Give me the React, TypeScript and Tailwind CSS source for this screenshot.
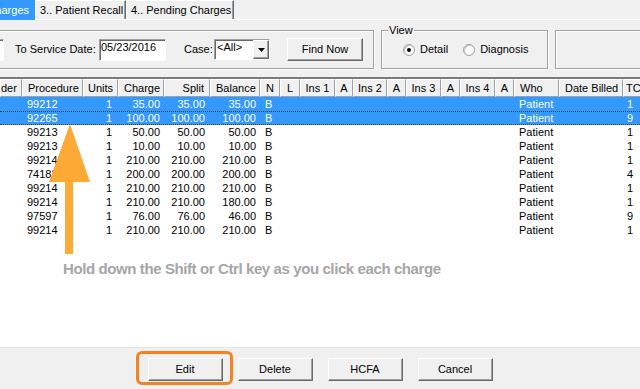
import React from "react";

const GRID =
  "grid grid-cols-[22px_61px_35px_46px_46px_50px_20px_20px_35px_18px_34px_19px_35px_19px_35px_19px_45px_64px_40px]";

const HEAD: { t: string; c: string }[] = [
  { t: "der", c: "pl-0" },
  { t: "Procedure", c: "pl-[5px]" },
  { t: "Units", c: "pl-[4px]" },
  { t: "Charge", c: "pl-[5px]" },
  { t: "Split", c: "justify-end pr-[5px]" },
  { t: "Balance", c: "pl-[5px]" },
  { t: "N", c: "justify-center" },
  { t: "L", c: "justify-center" },
  { t: "Ins 1", c: "justify-center" },
  { t: "A", c: "justify-center" },
  { t: "Ins 2", c: "justify-center" },
  { t: "A", c: "justify-center" },
  { t: "Ins 3", c: "justify-center" },
  { t: "A", c: "justify-center" },
  { t: "Ins 4", c: "justify-center" },
  { t: "A", c: "justify-center" },
  { t: "Who", c: "pl-[5px]" },
  { t: "Date Billed", c: "pl-[5px]" },
  { t: "TC", c: "pl-[2px]" },
];

const CELL_ALIGN = [
  "",
  "pl-[5px]",
  "justify-end pr-[6px]",
  "justify-end pr-[4px]",
  "justify-end pr-[5px]",
  "justify-end pr-[4px]",
  "pl-[5px]",
  "",
  "",
  "",
  "",
  "",
  "",
  "",
  "",
  "",
  "pl-[5px]",
  "",
  "justify-end pr-[30px]",
];

type Row = { proc: string; charge: string; split: string; bal: string; tc: string };

const ROWS: Row[] = [
  { proc: "99212", charge: "35.00", split: "35.00", bal: "35.00", tc: "1" },
  { proc: "92265", charge: "100.00", split: "100.00", bal: "100.00", tc: "9" },
  { proc: "99213", charge: "50.00", split: "50.00", bal: "50.00", tc: "1" },
  { proc: "99213", charge: "10.00", split: "10.00", bal: "10.00", tc: "1" },
  { proc: "99214", charge: "210.00", split: "210.00", bal: "210.00", tc: "1" },
  { proc: "74182", charge: "200.00", split: "200.00", bal: "200.00", tc: "4" },
  { proc: "99214", charge: "210.00", split: "210.00", bal: "210.00", tc: "1" },
  { proc: "99214", charge: "210.00", split: "210.00", bal: "180.00", tc: "1" },
  { proc: "97597", charge: "76.00", split: "76.00", bal: "46.00", tc: "9" },
  { proc: "99214", charge: "210.00", split: "210.00", bal: "210.00", tc: "1" },
];

const SUNKEN =
  "bg-white border border-t-[#a0a0a0] border-l-[#a0a0a0] border-r-white border-b-white shadow-[inset_1px_1px_0_#696969]";
const RAISED =
  "bg-[#f0f0f0] border border-t-white border-l-white border-r-[#696969] border-b-[#696969] shadow-[inset_-1px_-1px_0_#a0a0a0]";
const GROUP = "border border-[#a0a0a0] shadow-[inset_1px_1px_0_#fff,1px_1px_0_#fff]";
const TAB =
  "h-[19px] border-t border-l border-white border-r border-r-[#696969] shadow-[inset_-1px_0_0_#a0a0a0] flex items-center pl-[4px] whitespace-nowrap shrink-0";

function Button({ label, w }: { label: string; w: string }) {
  return (
    <div className={`${RAISED} ${w} h-[23px] flex items-center justify-center shrink-0`}>
      {label}
    </div>
  );
}

function Radio({ on, label, ml }: { on?: boolean; label: string; ml: string }) {
  return (
    <div className={`flex items-center ${ml}`}>
      <div className="w-[12px] h-[12px] rounded-full bg-white border border-[#a0a0a0] shadow-[inset_1px_1px_0_#c8c8c8] flex items-center justify-center">
        {on && <div className="w-[4px] h-[4px] rounded-full bg-black" />}
      </div>
      <span className="ml-[5px]">{label}</span>
    </div>
  );
}

export default function App() {
  return (
    <div className="relative w-[640px] h-[389px] overflow-hidden bg-[#f0f0f0] text-black text-[11px] leading-[13px] font-['Liberation_Sans',Arial,sans-serif] flex flex-col">
      {/* Tabs */}
      <div className="h-[20px] flex items-stretch border-b border-white shrink-0">
        <div className="w-[35px] h-[20px] bg-[#3399ff] text-white flex items-center justify-end pr-[6px] whitespace-nowrap shrink-0">
          Charges
        </div>
        <div className={`${TAB} w-[91px]`}>3.. Patient Recall</div>
        <div className={`${TAB} w-[108px]`}>4.. Pending Charges</div>
      </div>

      {/* Filter area */}
      <div className="h-[57px] shrink-0 flex items-start pt-[10px]">
        <div className={`${GROUP} ml-[-10px] w-[384px] h-[39px] flex items-center shrink-0`}>
          <div className={`${SUNKEN} w-[13px] h-[22px] shrink-0`} />
          <span className="ml-[11px] w-[84px] shrink-0 whitespace-nowrap">To Service Date:</span>
          <div className={`${SUNKEN} w-[67px] h-[22px] pl-[1px] pt-[1px] shrink-0 whitespace-nowrap`}>
            05/23/2016
          </div>
          <span className="ml-[18px] w-[30px] shrink-0">Case:</span>
          <div className={`${SUNKEN} w-[56px] h-[21px] flex items-stretch shrink-0`}>
            <span className="flex-1 pl-[2px] pt-[1px]">&lt;All&gt;</span>
            <div className={`${RAISED} w-[16px] flex items-center justify-center`}>
              <svg width="7" height="4" viewBox="0 0 7 4">
                <polygon points="0,0 7,0 3.5,4" fill="#000" />
              </svg>
            </div>
          </div>
          <div className="ml-[17px]">
            <Button label="Find Now" w="w-[76px]" />
          </div>
        </div>

        <div className={`${GROUP} relative ml-[7px] w-[167px] h-[39px] flex items-center shrink-0`}>
          <span className="absolute left-[6px] top-[-7px] px-[1px] bg-[#f0f0f0]">View</span>
          <Radio on label="Detail" ml="ml-[21px]" />
          <Radio label="Diagnosis" ml="ml-[15px]" />
        </div>

        <div className={`${GROUP} ml-[7px] w-[100px] h-[39px] shrink-0`} />
      </div>

      {/* Grid */}
      <div className="flex-1 bg-white border-t-2 border-t-[#7a7a7a] overflow-hidden">
        <div className={`${GRID} h-[18px] bg-[#f0f0f0]`}>
          {HEAD.map((h, i) => (
            <div
              key={i}
              className={`flex items-center overflow-hidden whitespace-nowrap border-t border-l border-white border-r border-r-[#a0a0a0] border-b border-b-[#a0a0a0] ${h.c}`}
            >
              {h.t}
            </div>
          ))}
        </div>
        {ROWS.map((r, ri) => {
          const sel = ri < 2;
          const focus = ri === 1;
          const vals = [
            "",
            r.proc,
            "1",
            r.charge,
            r.split,
            r.bal,
            "B",
            "",
            "",
            "",
            "",
            "",
            "",
            "",
            "",
            "",
            "Patient",
            "",
            r.tc,
          ];
          return (
            <div
              key={ri}
              className={`${GRID} h-[14px] ${sel ? "bg-[#3399ff] text-white" : ""} ${
                focus ? "border-y border-dotted border-[#5a3a10]" : ""
              }`}
            >
              {vals.map((v, ci) => (
                <div key={ci} className={`flex items-center overflow-hidden whitespace-nowrap ${CELL_ALIGN[ci]}`}>
                  {v}
                </div>
              ))}
            </div>
          );
        })}
      </div>

      {/* Buttons */}
      <div className="h-[42px] shrink-0 border-t border-[#e3e3e3] flex justify-center items-start pt-[10px] gap-[15px]">
        <Button label="Edit" w="w-[75px]" />
        <Button label="Delete" w="w-[75px]" />
        <Button label="HCFA" w="w-[75px]" />
        <Button label="Cancel" w="w-[75px]" />
      </div>

      {/* Annotation overlays */}
      <svg className="absolute left-0 top-0 pointer-events-none" width="640" height="389">
        <polygon points="70,124 49,182 65,182 65,254 73,254 73,182 90,182" fill="#fcaa35" />
      </svg>
      <div className="absolute left-[63px] top-[260px] text-[15px] font-bold tracking-[-0.4px] leading-[18px] text-[#a6a6a6] whitespace-nowrap">
        Hold down the Shift or Ctrl key as you click each charge
      </div>
      <div className="absolute left-[136px] top-[351px] w-[97px] h-[34px] border-[3px] border-[#f58220] rounded-[6px] pointer-events-none" />
    </div>
  );
}
